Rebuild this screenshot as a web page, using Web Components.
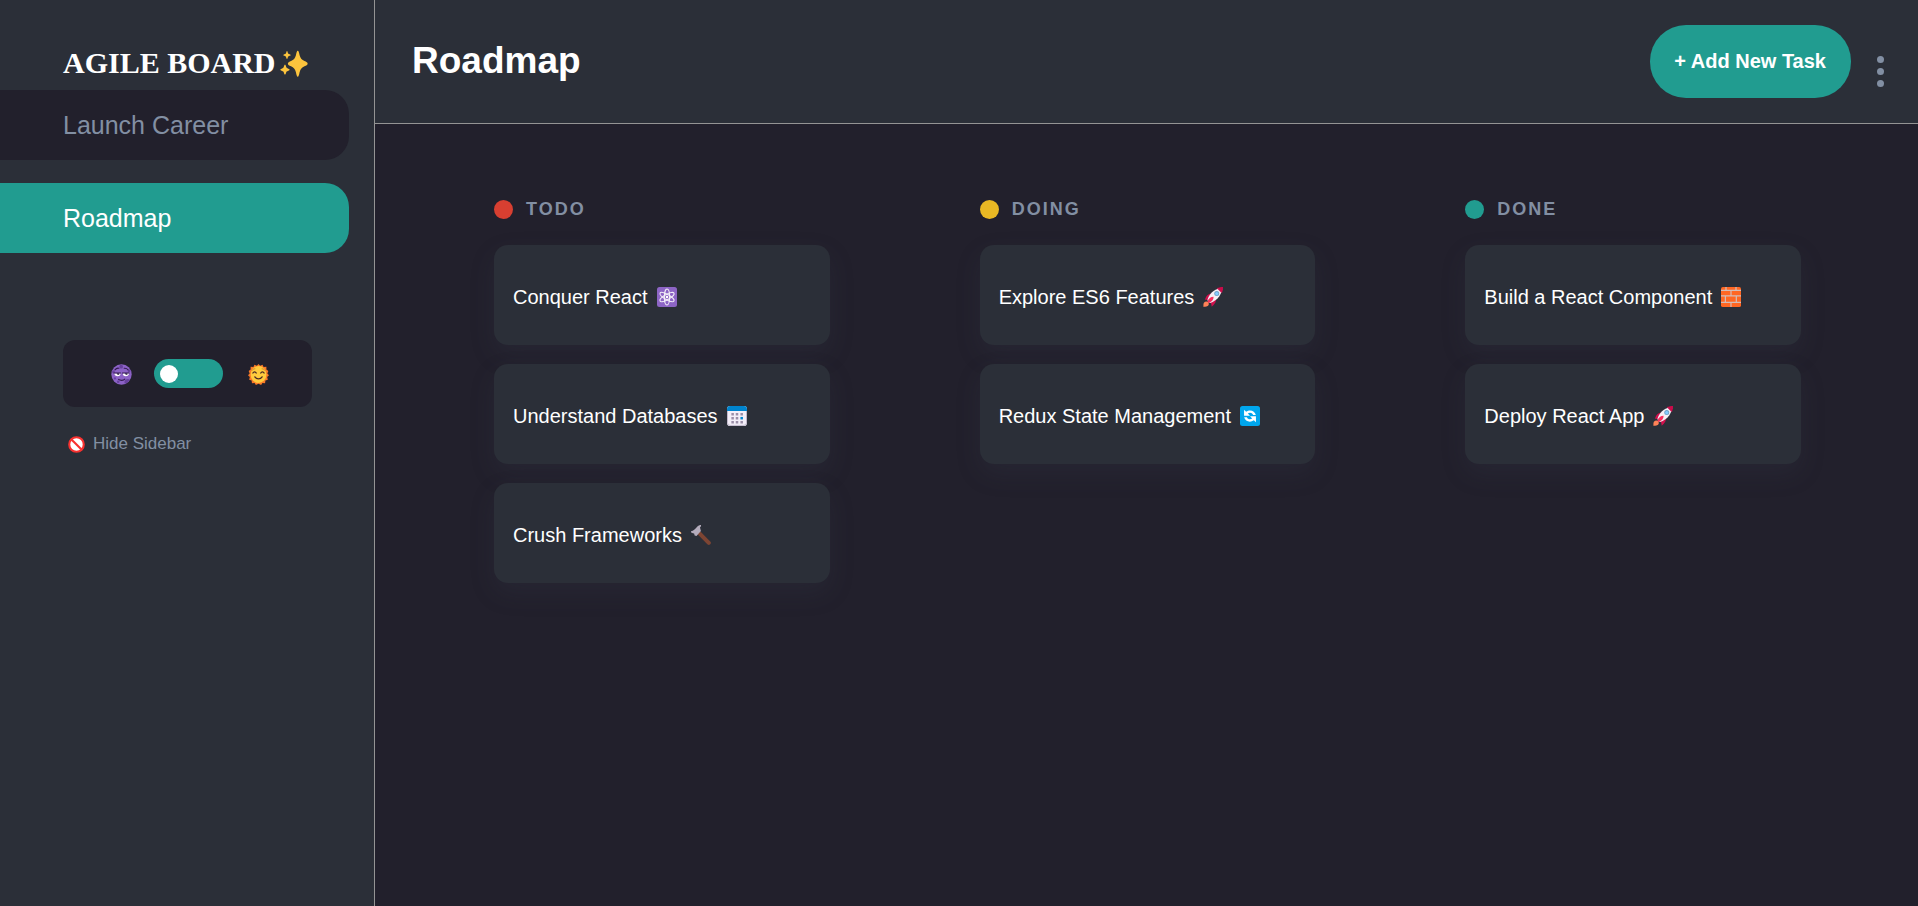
<!DOCTYPE html>
<html lang="en">
<head>
<meta charset="utf-8">
<meta name="viewport" content="width=device-width, initial-scale=1">
<title>Agile Board</title>
<style>
  :root {
    --surface: #2b2f38;
    --canvas: #22202c;
    --accent: #219c90;
    --muted: #828fa3;
    --line: #949494;
  }
  body { margin: 0; background: var(--canvas); color: #fff; font-family: "Liberation Sans", Arial, sans-serif; }
</style>
</head>
<body>
<agile-app>
  <side-bar slot="sidebar">
    <nav-item>Launch Career</nav-item>
    <nav-item active>Roadmap</nav-item>
  </side-bar>
  <board-header slot="header">Roadmap</board-header>
  <board-column color="#d83f31" label="TODO">
    <task-card icon="atom">Conquer React</task-card>
    <task-card icon="calendar">Understand Databases</task-card>
    <task-card icon="hammer">Crush Frameworks</task-card>
  </board-column>
  <board-column color="#e9b824" label="DOING">
    <task-card icon="rocket">Explore ES6 Features</task-card>
    <task-card icon="cycle">Redux State Management</task-card>
  </board-column>
  <board-column color="#219c90" label="DONE">
    <task-card icon="brick">Build a React Component</task-card>
    <task-card icon="rocket">Deploy React App</task-card>
  </board-column>
</agile-app>

<script>
const ICONS = {
  sparkles: `<g fill="#fcc43d"><path d="M20.3 0.6C21.3 .6 21.7 2.3 22.4 5.2 23.4 8.7 25 10 28 11.6 30 12.6 31.6 13 31.6 14.4S30 16.3 28 17.2C25 18.8 23.4 20 22.4 23.6 21.7 26.7 21.3 28.4 20.3 28.4S18.9 26.7 18.2 23.6C17.2 20 15.6 18.8 12.6 17.2 10.6 16.3 9 15.8 9 14.4S10.6 12.6 12.6 11.6C15.6 10 17.2 8.700 18.2 5.2 18.9 2.3 19.3.6 20.3.6Z" transform="translate(0 1.500) scale(1 1.060)"/><path d="M8 .8C8.6.8 8.9 3.3 9.5 3.9S12.3 4.700 12.300 5.400 10.100 6.400 9.500 7 8.600 9.900 8 9.900 7.100 7.600 6.500 7 3.700 6.100 3.700 5.400 5.900 4.500 6.500 3.900 7.400.8 8 .8Z" transform="translate(0 1.500)"/><path d="M5.700 15.700C6.500 15.700 6.900 18.600 7.600 19.400S11.100 20.700 11.100 21.600 8.300 23 7.600 23.800 6.500 27.500 5.700 27.500 4.500 24.600 3.800 23.800.3 22.500.3 21.600 3.100 20.200 3.800 19.400 4.900 15.700 5.700 15.700Z" transform="translate(0 2)"/></g>`,
  moon: `<circle cx="16" cy="16" r="15.500" fill="#8c62c6"/><g fill="#68419e"><circle cx="15.500" cy="4" r="2.800"/><circle cx="3.800" cy="12" r="2.200"/><path d="M20.500 27.500c0-3 2.500-4.500 5.500-4.500 1.200 0 2 .3 2.700 1-1.800 3-4.300 5-7.500 6.200-.5-.8-.7-1.700-.7-2.700Z"/><circle cx="11" cy="27" r="2"/><circle cx="27.500" cy="10.500" r="2"/><circle cx="6" cy="22" r="1.700"/></g><path d="M5 14h9.500c.3 3-1.500 4.600-4.300 4.600S5.200 17 5 14ZM18 14h9.500c-.2 3-2.200 4.600-5 4.600S17.700 17 18 14Z" fill="#fff"/><path d="M8.500 14h4v2.500h-2.500ZM21 14h4v2.500h-2.500Z" fill="#2c1a43"/><path d="M4.500 13.600h10M17.500 13.600h10M6 9c2-2.600 4-3 6-2.500M20 6.500c2.500-.4 4.500.5 6 2.500M11.500 23.500c2.500 2 7.500 2 9.500-.5" fill="none" stroke="#321b4f" stroke-width="1.600" stroke-linecap="round"/>`,
  sun: `<path d="M13.500 2.500 16 0l2.500 2.500 3.700-1.500 1.500 3.500 4.300-.5v4.300l3 2.200-1.500 4 2.500 2.500-2.800 2.800 1 4.200-3.700 1.200-.5 4.300-4-.5-2 3-4-2-4 2-2-3-4 .5-.5-4.300-3.700-1.200 1-4.200L0 17l2.500-2.500-1.500-4 3-2.200V4l4.300.5L9.800 1Z" fill="#f97a28"/><ellipse cx="16" cy="16" rx="12" ry="13" fill="#ffcb3d"/><path d="M7.500 13.800c1-2.300 4-2.300 5 0M19.500 13.800c1-2.300 4-2.300 5 0M10.500 19.500c2.500 4 8.500 4 11 0" fill="none" stroke="#4a2b25" stroke-width="1.900" stroke-linecap="round"/><path d="M6.500 9.500c1-1.500 2.500-2.300 4-2.200M21.500 7.300c1.500 0 3 .7 4 2.200" fill="none" stroke="#c9852a" stroke-width="1.500" stroke-linecap="round"/>`,
  ban: `<circle cx="16" cy="16" r="13.700" fill="#fff" stroke="#f8312f" stroke-width="4"/><path d="m6.500 6.500 19 19" stroke="#f8312f" stroke-width="4"/>`,
  atom: `<rect width="32" height="32" rx="4" fill="#8d65c5"/><g fill="none" stroke="#f3eef8" stroke-width="1.800"><ellipse cx="16" cy="16" rx="4.200" ry="12.800"/><ellipse cx="16" cy="16" rx="4.200" ry="12.800" transform="rotate(60 16 16)"/><ellipse cx="16" cy="16" rx="4.200" ry="12.800" transform="rotate(120 16 16)"/></g><circle cx="16" cy="16" r="2" fill="#fff"/>`,
  calendar: `<rect width="32" height="32" rx="5" fill="#f3eef8"/><path d="M0 8V5a5 5 0 0 1 5-5h22a5 5 0 0 1 5 5v3Z" fill="#0084ce"/><path d="M.8 8v19a4 4 0 0 0 4 4h22.400a4 4 0 0 0 4-4V8" fill="none" stroke="#bdb4c8" stroke-width="1.500"/><g fill="#9b8fa8"><path d="M7 11h4v4H7zM14 11h4v4h-4zM21.500 11h4v4h-4zM7 17.500h4v4H7zM14 17.500h4v4h-4zM7 24h4v4H7zM14 24h4v4h-4zM21.500 24h4v4h-4z"/></g><path d="M21.500 17.500h4v4h-4z" fill="#0084ce"/>`,
  hammer: `<path d="m13.500 13.500 15 15" stroke="#7d4533" stroke-width="6.500" stroke-linecap="round"/><path d="M0 9.800C4 9.500 6.500 6 9.500 3 11.500.8 14 0 16 0v2.500c-1.500.4-1.800 1.500-1.200 3l1 4-7 8-3-.8L5 13.500 3 13 .2 12Z" fill="#b4acbc"/>`,
  rocket: `<path d="M3 20.500C6 12 9.500 10.500 15 11l6 6c.5 6-2 10-7 14.500l-1-5-6-6ZM22 1.500l10-1.500-1.500 9.500Z" fill="#d0104c"/><path d="M7 21C9.500 11.500 16 4 28.500 1.500l2.200 2C28 15.500 21 22.500 11 25.500Z" fill="#f4f0f6"/><path d="M23 2.600C26 .8 29 0 32 0c0 3-.8 6-2.600 9Z" fill="#ca0b4a"/><circle cx="22" cy="10.500" r="4" fill="#6fa3c8"/><circle cx="22" cy="10.500" r="2.600" fill="#83cbff"/><path d="M7 23.500c2-5.500 5-8 10-8 0 5-3 8.500-8.500 10Z" fill="#f92f60"/><path d="M1.500 25c2-2.500 5-2.500 6.700-.8s1.500 4.300-.7 6.300c-2 1.500-5 1-7 1C1 29 .2 27 1.500 25Z" fill="#ff8257"/>`,
  cycle: `<rect width="32" height="32" rx="4" fill="#00a6ed"/><path d="M6.500 6v9.500H16l-3.500-3.500c3-2.200 7-1.500 8.500 2.500h4.300C24 7.300 15.500 4.800 9.800 9.200ZM25.500 26v-9.500H16l3.500 3.500c-3 2.200-7 1.500-8.500-2H6.700c1.300 6.700 9.800 9.200 15.500 4.800Z" fill="#fff"/>`,
  brick: `<rect width="32" height="32" rx="3" fill="#ff6723"/><path d="M0 5.500h32M0 14.200h32M0 24.500h32M8 0v5.500M24 0v5.500M16 5.500v8.700M7 14.200v10M24.500 14.200v10M16 24.500V32" fill="none" stroke="#d3bdb8" stroke-width="1.900"/>`,
};

function define(name, html, setup) {
  const template = document.createElement('template');
  template.innerHTML = html;
  customElements.define(name, class extends HTMLElement {
    constructor() {
      super();
      this.attachShadow({ mode: 'open' }).append(template.content.cloneNode(true));
    }
    connectedCallback() { if (setup) setup(this, this.shadowRoot); }
  });
}

define('emoji-icon', `
  <style>
    :host { display: block; flex: none; width: 20px; height: 20px; }
    svg { display: block; width: 100%; height: 100%; }
  </style>
  <svg viewBox="0 0 32 32" aria-hidden="true"></svg>`,
  (el, root) => { root.querySelector('svg').innerHTML = ICONS[el.getAttribute('name')]; });

define('nav-item', `
  <style>
    :host { display: block; }
    a { display: flex; align-items: center; height: 70px; padding-left: 63px; background: var(--canvas);
        border-radius: 0 24px 24px 0; color: var(--muted); font-size: 25px; text-decoration: none; }
    :host([active]) a { background: var(--accent); color: #fff; }
  </style>
  <a href="#"><slot></slot></a>`);

define('theme-switch', `
  <style>
    :host { display: flex; align-items: center; justify-content: center; gap: 22px; height: 67px;
            box-sizing: border-box; padding-left: 4px; background: var(--canvas); border-radius: 12px; }
    emoji-icon { width: 21px; height: 21px; margin-top: 2px; }
    input { appearance: none; display: flex; align-items: center; width: 69px; height: 29px; margin: 0 3px 0 0;
            padding: 0 6px; box-sizing: border-box; border-radius: 15px; background: var(--accent); cursor: pointer; }
    input::before { content: ""; width: 18px; height: 18px; border-radius: 50%; background: #fff; }
    input:checked { justify-content: flex-end; }
  </style>
  <emoji-icon name="moon"></emoji-icon>
  <input type="checkbox" role="switch" aria-label="Light theme">
  <emoji-icon name="sun"></emoji-icon>`);

define('side-bar', `
  <style>
    :host { display: block; box-sizing: border-box; background: var(--surface); border-right: 1px solid var(--line); }
    h1 { display: flex; align-items: center; gap: 4px; margin: 0; padding: 46px 0 10px 63px;
         font: bold 30px/34px "Liberation Serif", "Times New Roman", serif; }
    h1 emoji-icon { width: 28px; height: 28px; }
    nav { display: grid; gap: 23px; padding-right: 25px; }
    theme-switch { margin: 87px 62px 0 63px; }
    button { display: flex; align-items: center; gap: 8px; margin: 27px 0 0 68px; padding: 0; border: 0;
             background: none; color: var(--muted); font: 17px/20px "Liberation Sans", Arial, sans-serif; cursor: pointer; }
    button emoji-icon { width: 17px; height: 17px; }
  </style>
  <h1>AGILE BOARD<emoji-icon name="sparkles"></emoji-icon></h1>
  <nav><slot></slot></nav>
  <theme-switch></theme-switch>
  <button type="button"><emoji-icon name="ban"></emoji-icon>Hide Sidebar</button>`);

define('board-header', `
  <style>
    :host { display: flex; align-items: center; padding: 25px 34px 25px 37px; background: var(--surface);
            border-bottom: 1px solid var(--line); }
    h2 { flex: 1; margin: 0; padding-bottom: 2px; font-size: 37px; line-height: 42px; }
    button { border: 0; cursor: pointer; }
    .add { height: 73px; padding: 0 25px 2px 24px; border-radius: 36px; background: var(--accent); color: #fff;
           font: bold 20px/24px "Liberation Sans", Arial, sans-serif; }
    .more { margin-left: 26px; padding: 19px 0 0; background: none; color: var(--muted); }
    .more svg { display: block; width: 7px; height: 31px; }
  </style>
  <h2><slot></slot></h2>
  <button class="add" type="button">+ Add New Task</button>
  <button class="more" type="button" aria-label="Board menu">
    <svg viewBox="0 0 7 31" fill="currentColor"><circle cx="3.500" cy="3.500" r="3.500"/><circle cx="3.500" cy="15.500" r="3.500"/><circle cx="3.500" cy="27.500" r="3.500"/></svg>
  </button>`);

define('board-column', `
  <style>
    :host { display: block; min-width: 0; }
    h3 { display: flex; align-items: center; gap: 13px; margin: 0 0 26px; color: var(--muted);
         font-size: 18px; line-height: 20px; letter-spacing: 2px; }
    i { width: 19px; height: 19px; border-radius: 50%; }
    .cards { display: grid; gap: 19px; }
  </style>
  <h3><i></i><span></span></h3>
  <div class="cards"><slot></slot></div>`,
  (el, root) => {
    root.querySelector('i').style.background = el.getAttribute('color');
    root.querySelector('span').textContent = el.getAttribute('label');
  });

define('task-card', `
  <style>
    :host { display: flex; align-items: center; gap: 9px; box-sizing: border-box; min-height: 100px; padding: 3px 19px 0;
            border-radius: 14px; background: var(--surface); box-shadow: 0 10px 24px rgba(62, 68, 84, .18);
            font-size: 20px; line-height: 24px; cursor: pointer; }
  </style>
  <span><slot></slot></span><emoji-icon></emoji-icon>`,
  (el, root) => {
    const icon = document.createElement('emoji-icon');
    icon.setAttribute('name', el.getAttribute('icon'));
    root.querySelector('emoji-icon').replaceWith(icon);
  });

define('agile-app', `
  <style>
    :host { display: grid; grid-template-columns: 375px minmax(0, 1fr); min-height: 100vh; }
    .page { display: flex; flex-direction: column; }
    main { display: grid; grid-template-columns: repeat(3, minmax(0, 1fr)); align-items: start; gap: 150px;
           padding: 75px 117px 60px 119px; }
  </style>
  <slot name="sidebar"></slot>
  <div class="page">
    <slot name="header"></slot>
    <main><slot></slot></main>
  </div>`);
</script>
</body>
</html>
